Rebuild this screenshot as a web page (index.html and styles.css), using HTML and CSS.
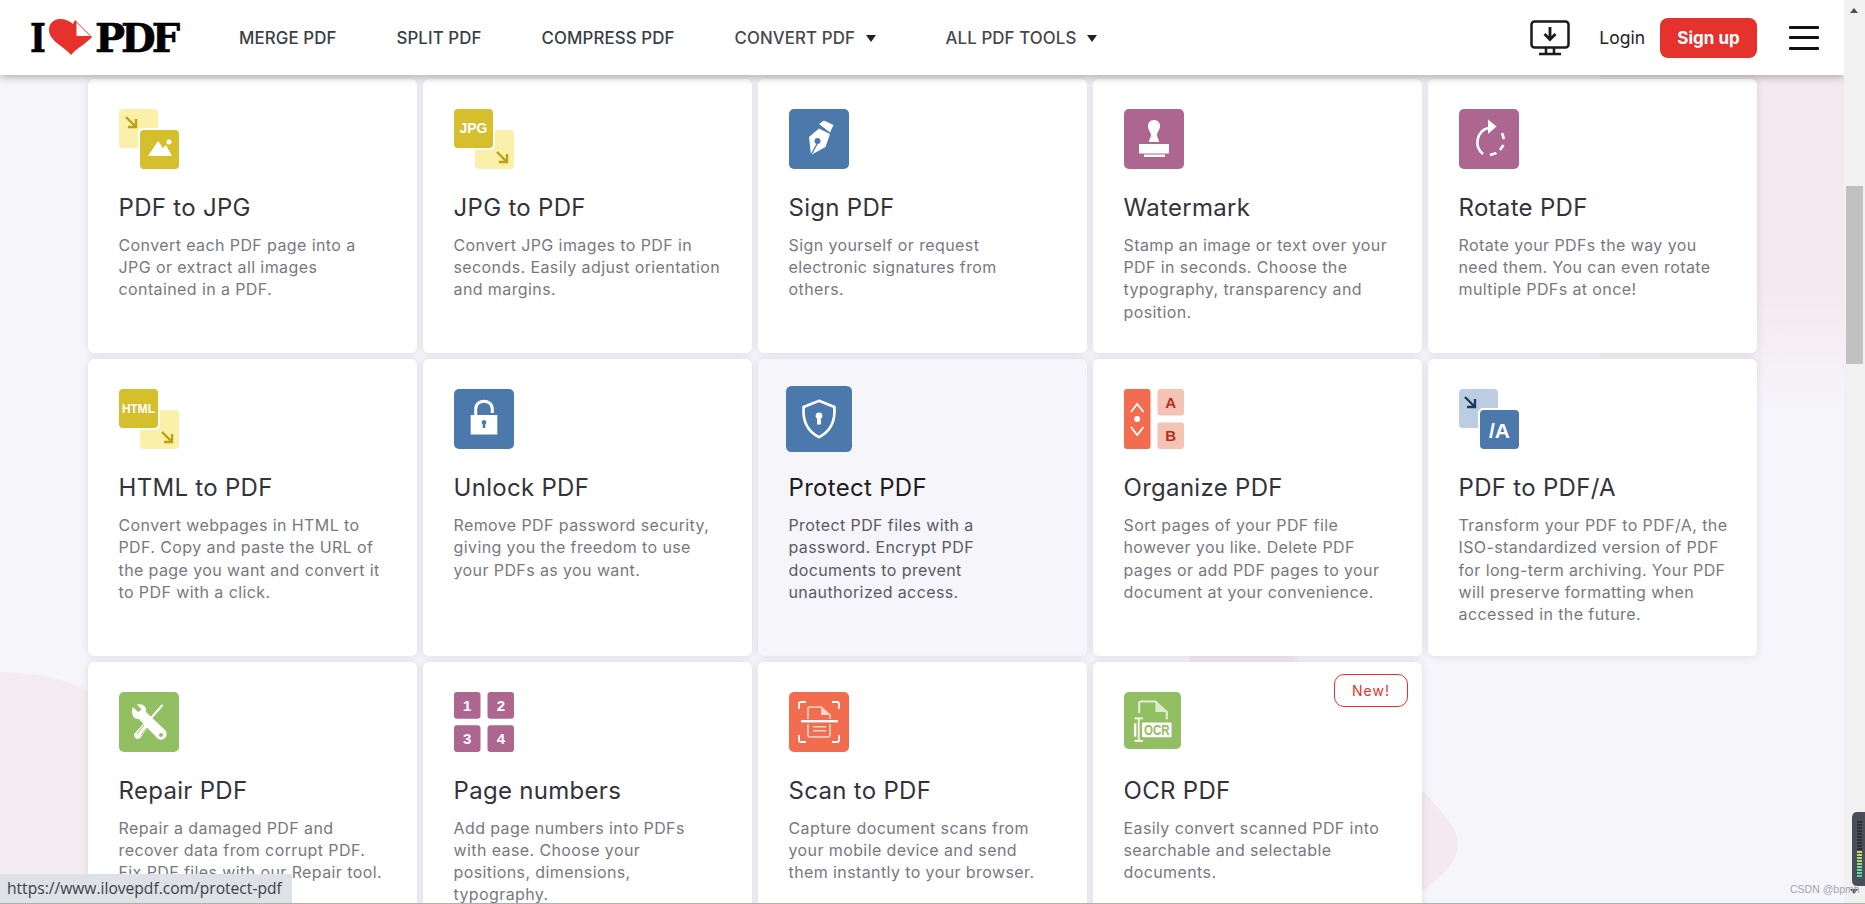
FILE: index.html
```html
<!DOCTYPE html>
<html lang="en">
<head>
  <meta charset="UTF-8">
  <title>iLovePDF</title>
  <link rel="stylesheet" href="styles.css">
</head>
<body>
  <div class="viewport">
    <svg class="blobs" width="1844" height="904" viewBox="0 0 1844 904">
      <defs>
        <linearGradient id="fade" gradientUnits="userSpaceOnUse" x1="0" y1="290" x2="0" y2="410">
          <stop offset="0" stop-color="#f5e9ef"/>
          <stop offset="1" stop-color="#f5e9ef" stop-opacity="0"/>
        </linearGradient>
      </defs>
      <path d="M0 672 C50 672 90 685 140 720 L260 904 L0 904 Z" fill="#f5ecf1"/>
      <path d="M1600 75 H1844 V410 H1600 Z" fill="url(#fade)"/>
      <path d="M1190 652 L1293 656 L1422 790 C1445 815 1458 830 1458 845 C1458 860 1440 880 1420 892 L1300 904 L1190 904 Z" fill="#f5e9ef"/>
    </svg>

    <header class="topbar">
      <a class="logo">
        <span class="logo-i">I</span>
        <svg class="logo-heart" width="44" height="37" viewBox="0 0 44 37">
          <path d="M22 36 C16 28 0 22 0 11 C0 4 5 0 11 0 C16 0 21 2 24 5 L26 1 L43 18 C38 24 28 29 22 36 Z" fill="#e5322d"/>
          <path d="M27.500 3.500 L41 17 L27.500 17 Z" fill="#fff"/>
        </svg>
        <span class="logo-pdf">PDF</span>
      </a>
      <nav class="nav">
        <a>MERGE PDF</a>
        <a>SPLIT PDF</a>
        <a>COMPRESS PDF</a>
        <a class="drop">CONVERT PDF <i class="caret"></i></a>
        <a class="drop">ALL PDF TOOLS <i class="caret"></i></a>
      </nav>
      <div class="actions">
        <svg class="desktop" width="40" height="36" viewBox="0 0 40 36" fill="none" stroke="#1a1a1a" stroke-width="2.500">
          <rect x="1.500" y="1.500" width="37" height="26" rx="3"/>
          <path d="M20 7 V19 M14.500 14 L20 19.500 L25.500 14" stroke-width="2.800"/>
          <path d="M16 28 V33 M24 28 V33 M9 34 H31"/>
        </svg>
        <a class="login">Login</a>
        <a class="signup">Sign up</a>
        <div class="burger"><span></span><span></span><span></span></div>
      </div>
    </header>

    <main class="tools">
      <div class="card">
        <svg class="icon" viewBox="0 0 60 60">
          <rect width="39" height="39" rx="4" fill="#fbf0a9"/>
          <path d="M7 8 L17 18 M17 10 V18 H9" stroke="#b9a110" stroke-width="2.400" fill="none"/>
          <rect x="19" y="19" width="42" height="42" rx="5" fill="#fff"/>
          <rect x="21" y="21" width="39" height="39" rx="4" fill="#d5bf2c"/>
          <path d="M29 47 L39 32 L44 39 L47 36 L53 47 Z" fill="#fff"/><circle cx="50" cy="33" r="2.500" fill="#fff"/>
        </svg>
        <h3>PDF to JPG</h3>
        <p>Convert each PDF page into a<br>JPG or extract all images<br>contained in a PDF.</p>
      </div>
      <div class="card">
        <svg class="icon" viewBox="0 0 60 60">
          <rect x="21" y="21" width="39" height="39" rx="4" fill="#fbf0a9"/>
          <path d="M43 43 L53 53 M53 45 V53 H45" stroke="#b9a110" stroke-width="2.400" fill="none"/>
          <rect x="-1" y="-1" width="42" height="42" rx="5" fill="#fff"/>
          <rect width="39" height="39" rx="4" fill="#d5bf2c"/>
          <text x="19.500" y="24" class="ico-txt" font-size="14">JPG</text>
        </svg>
        <h3>JPG to PDF</h3>
        <p>Convert JPG images to PDF in<br>seconds. Easily adjust orientation<br>and margins.</p>
      </div>
      <div class="card">
        <svg class="icon" viewBox="0 0 60 60">
          <rect width="60" height="60" rx="5" fill="#4b79ab"/>
          <path d="M30 15 L35 11.500 L44.500 16 L41 23.500 Z" fill="#fff"/>
          <path d="M30 19.500 L41 25 L36.500 38 L22 46 L20 28 Z" fill="#fff"/>
          <path d="M28.500 34 L22 46" stroke="#4b79ab" stroke-width="1.400"/>
          <circle cx="28.500" cy="32" r="3" fill="#4b79ab"/>
        </svg>
        <h3>Sign PDF</h3>
        <p>Sign yourself or request<br>electronic signatures from<br>others.</p>
      </div>
      <div class="card">
        <svg class="icon" viewBox="0 0 60 60">
          <rect width="60" height="60" rx="5" fill="#ad6690"/>
          <path d="M30 11 C34 11 36 14 36 17 C36 21 33 23 33 26 C33 29 35 30 35 33 H25 C25 30 27 29 27 26 C27 23 24 21 24 17 C24 14 26 11 30 11 Z" fill="#fff"/>
          <rect x="15" y="35" width="30" height="9.500" fill="#fff"/><rect x="20" y="45.500" width="21" height="2.500" fill="#fff"/>
        </svg>
        <h3>Watermark</h3>
        <p>Stamp an image or text over your<br>PDF in seconds. Choose the<br>typography, transparency and<br>position.</p>
      </div>
      <div class="card">
        <svg class="icon" viewBox="0 0 60 60">
          <rect width="60" height="60" rx="5" fill="#ad6690"/>
          <path d="M29 19 A15 15 0 0 0 24 45" stroke="#fff" stroke-width="2.600" fill="none"/>
          <path d="M29 10.500 L37.500 17.500 L29 25 Z" fill="#fff"/>
          <path d="M43 24 L45 30 M44.500 36 L41 41 M37.500 44 L31 46" stroke="#fff" stroke-width="2.600" fill="none"/>
        </svg>
        <h3>Rotate PDF</h3>
        <p>Rotate your PDFs the way you<br>need them. You can even rotate<br>multiple PDFs at once!</p>
      </div>

      <div class="card">
        <svg class="icon" viewBox="0 0 60 60">
          <rect x="21" y="21" width="39" height="39" rx="4" fill="#fbf0a9"/>
          <path d="M43 43 L53 53 M53 45 V53 H45" stroke="#b9a110" stroke-width="2.400" fill="none"/>
          <rect x="-1" y="-1" width="42" height="42" rx="5" fill="#fff"/>
          <rect width="39" height="39" rx="4" fill="#d5bf2c"/>
          <text x="19.500" y="24" class="ico-txt" font-size="13" textLength="33" lengthAdjust="spacingAndGlyphs">HTML</text>
        </svg>
        <h3>HTML to PDF</h3>
        <p>Convert webpages in HTML to<br>PDF. Copy and paste the URL of<br>the page you want and convert it<br>to PDF with a click.</p>
      </div>
      <div class="card">
        <svg class="icon" viewBox="0 0 60 60">
          <rect width="60" height="60" rx="5" fill="#4b79ab"/>
          <path d="M21.700 26 V20 C21.700 9.500 38.300 9.500 38.300 20 V24" stroke="#fff" stroke-width="3" fill="none"/>
          <rect x="16.700" y="26" width="26.600" height="19.500" fill="#fff"/>
          <path d="M30 31 A2.500 2.500 0 0 1 31.300 35.500 V39 H28.700 V35.500 A2.500 2.500 0 0 1 30 31 Z" fill="#4b79ab"/>
        </svg>
        <h3>Unlock PDF</h3>
        <p>Remove PDF password security,<br>giving you the freedom to use<br>your PDFs as you want.</p>
      </div>
      <div class="card hovered">
        <svg class="icon" viewBox="0 0 60 60">
          <rect width="60" height="60" rx="5" fill="#4b79ab"/>
          <path d="M30 13.500 L44 19 C45 32 41 41 30 46.500 C19 41 15 32 16 19 Z" stroke="#fff" stroke-width="2.400" fill="none"/>
          <path d="M30 24 A3 3 0 0 1 31.800 29.500 V35 H28.200 V29.500 A3 3 0 0 1 30 24 Z" fill="#fff"/>
        </svg>
        <h3>Protect PDF</h3>
        <p>Protect PDF files with a<br>password. Encrypt PDF<br>documents to prevent<br>unauthorized access.</p>
      </div>
      <div class="card">
        <svg class="icon" viewBox="0 0 60 60">
          <rect width="26.500" height="60" rx="3" fill="#f26c4f"/>
          <rect x="33.500" width="26.500" height="26.500" rx="3" fill="#f5c3b3"/>
          <rect x="33.500" y="33.500" width="26.500" height="26.500" rx="3" fill="#f5c3b3"/>
          <path d="M7 23 L13.200 15 L19.500 23 M7 38 L13.200 46 L19.500 38" stroke="#fff" stroke-width="1.800" fill="none"/>
          <circle cx="13.200" cy="30" r="3" fill="#fff"/>
          <text x="46.700" y="19" class="ico-txt ico-red" font-size="15">A</text>
          <text x="46.700" y="52" class="ico-txt ico-red" font-size="15">B</text>
        </svg>
        <h3>Organize PDF</h3>
        <p>Sort pages of your PDF file<br>however you like. Delete PDF<br>pages or add PDF pages to your<br>document at your convenience.</p>
      </div>
      <div class="card">
        <svg class="icon" viewBox="0 0 60 60">
          <rect width="39" height="39" rx="4" fill="#bdcde1"/>
          <path d="M6 8 L16 18 M16 10 V18 H8" stroke="#1f3a5c" stroke-width="2.400" fill="none"/>
          <rect x="19" y="19" width="42" height="42" rx="5" fill="#fff"/>
          <rect x="21" y="21" width="39" height="39" rx="4" fill="#4b79ab"/>
          <text x="40.500" y="48.500" class="ico-txt" font-size="21">/A</text>
        </svg>
        <h3>PDF to PDF/A</h3>
        <p>Transform your PDF to PDF/A, the<br>ISO-standardized version of PDF<br>for long-term archiving. Your PDF<br>will preserve formatting when<br>accessed in the future.</p>
      </div>

      <div class="card">
        <svg class="icon" viewBox="0 0 60 60">
          <rect width="60" height="60" rx="5" fill="#92bf61"/>
          <path d="M14 15 L19 20 L22.500 17.500 L18 12.500 C24 11 28 15 27 20 L46 38 A5.500 5.500 0 1 1 38 46 L20 27 C15 28 11 22 14 15 Z" fill="#fff"/>
          <circle cx="42" cy="43" r="2" fill="#92bf61"/>
          <path d="M43.500 13 L32 26" stroke="#fff" stroke-width="2"/>
          <path d="M29 26.500 L33 30.500 L21 46 C18 49 13 44 16 41 Z" fill="#fff"/>
          <path d="M25 33 L18 42 M28 36 L22 43" stroke="#92bf61" stroke-width="1"/>
        </svg>
        <h3>Repair PDF</h3>
        <p>Repair a damaged PDF and<br>recover data from corrupt PDF.<br>Fix PDF files with our Repair tool.</p>
      </div>
      <div class="card">
        <svg class="icon" viewBox="0 0 60 60">
          <rect width="26.500" height="26.700" rx="3" fill="#ad6690"/>
          <rect x="33.500" width="26.500" height="26.700" rx="3" fill="#ad6690"/>
          <rect y="33.300" width="26.500" height="26.700" rx="3" fill="#ad6690"/>
          <rect x="33.500" y="33.300" width="26.500" height="26.700" rx="3" fill="#ad6690"/>
          <text x="13.200" y="18.700" class="ico-txt" font-size="15">1</text>
          <text x="46.800" y="18.700" class="ico-txt" font-size="15">2</text>
          <text x="13.200" y="52" class="ico-txt" font-size="15">3</text>
          <text x="46.800" y="52" class="ico-txt" font-size="15">4</text>
        </svg>
        <h3>Page numbers</h3>
        <p>Add page numbers into PDFs<br>with ease. Choose your<br>positions, dimensions,<br>typography.</p>
      </div>
      <div class="card">
        <svg class="icon" viewBox="0 0 60 60">
          <rect width="60" height="60" rx="5" fill="#f26c4f"/>
          <path d="M10 17 V12 Q10 10 12 10 H17 M43 10 H48 Q50 10 50 12 V17 M10 43 V48 Q10 50 12 50 H17 M43 50 H48 Q50 50 50 48 V43" stroke="#fff" stroke-width="1.800" fill="none"/>
          <path d="M19 27 V17 Q19 15 21 15 H32 L41 23 V27 M19 32 V43 Q19 45 21 45 H39 Q41 45 41 43 V32" stroke="#fbd8cd" stroke-width="1.600" fill="none"/>
          <path d="M32 15 V23 H41 Z" fill="#fbd8cd"/>
          <rect x="12" y="28" width="37" height="2.400" fill="#fff"/>
          <path d="M24 34.700 H37 M24 38.700 H37" stroke="#fbd8cd" stroke-width="1.500"/>
        </svg>
        <h3>Scan to PDF</h3>
        <p>Capture document scans from<br>your mobile device and send<br>them instantly to your browser.</p>
      </div>
      <div class="card">
        <span class="badge">New!</span>
        <svg class="icon icon-ocr" viewBox="0 0 60 60">
          <rect width="60" height="60" rx="5" fill="#92bf61"/>
          <path d="M16 22 V12 Q16 10 18 10 H33 L45 21 V29" stroke="#e4f0d6" stroke-width="2.200" fill="none"/>
          <path d="M33 10 V21 H45 Z" fill="#dcebc8"/>
          <path d="M11 27.700 H20 M15.500 27.700 V51.500 M11 51.500 H20" stroke="#fff" stroke-width="1.800"/>
          <rect x="10.500" y="33" width="2.500" height="14" fill="#fff"/>
          <rect x="19" y="32" width="31" height="15.500" rx="1" fill="#fff"/>
          <text x="34.500" y="45" class="ico-txt ico-green" font-size="15" textLength="27" lengthAdjust="spacingAndGlyphs">OCR</text>
        </svg>
        <h3>OCR PDF</h3>
        <p>Easily convert scanned PDF into<br>searchable and selectable<br>documents.</p>
      </div>
    </main>

    <div class="status">https://www.ilovepdf.com/protect-pdf</div>
  </div>

  <div class="scrollbar">
    <i class="arrow-up"></i>
    <div class="thumb"></div>
    <i class="arrow-down"></i>
  </div>

  <div class="mark">CSDN @bpmh</div>
  <div class="meter"><div class="meter-bars"></div></div>
  <div class="edge"></div>
</body>
</html>
```

FILE: styles.css
```css
* {
  box-sizing: border-box;
}

html, body {
  height: 904px;
  margin: 0;
  overflow: hidden;
}

body {
  position: relative;
  display: flex;
  background-color: #f5f5fa;
  font-family: 'Inter', 'Roboto', sans-serif;
  color: #383e45;
}

.viewport {
  position: relative;
  flex: 1;
  height: 904px;
  overflow: hidden;
}

.blobs {
  position: absolute;
  left: 0;
  top: 0;
}

/* top bar */
.topbar {
  position: relative;
  z-index: 2;
  display: flex;
  align-items: center;
  height: 75px;
  padding-left: 30px;
  background: #fff;
  box-shadow: 0 2px 8px rgba(0, 0, 0, 0.3);
}

.logo {
  display: flex;
  align-items: center;
  width: 209px;
  color: #000;
  font-family: 'DejaVu Serif', serif;
  font-weight: bold;
  font-size: 40px;
  -webkit-text-stroke: 0.6px #000;
}

.logo-i {
  width: 19px;
  transform: scaleX(0.85);
  transform-origin: left;
}

.logo-pdf {
  margin-left: 2px;
  letter-spacing: -4px;
}

.nav {
  display: flex;
  align-items: center;
  gap: 60px;
  font-size: 16.85px;
  font-weight: 500;
  letter-spacing: 0.1px;
}

.nav .drop {
  color: #47474f;
  margin-right: 10px;
}

.caret {
  display: inline-block;
  width: 0;
  height: 0;
  margin-left: 6px;
  border: 5.5px solid transparent;
  border-top: 7px solid #222;
  border-bottom: 0;
  vertical-align: 2px;
}

.actions {
  display: flex;
  align-items: center;
  margin-left: auto;
}

.login {
  margin-left: 29px;
  font-size: 17.5px;
  color: #222;
}

.signup {
  display: flex;
  align-items: center;
  justify-content: center;
  width: 97px;
  height: 40px;
  margin-left: 15px;
  background: #e5322d;
  border-radius: 8px;
  color: #fff;
  font-size: 17px;
  font-weight: 700;
}

.burger {
  display: flex;
  flex-direction: column;
  gap: 7.5px;
  width: 30px;
  margin: 0 25px 0 32px;
}

.burger span {
  height: 3px;
  background: #111;
  border-radius: 1px;
}

/* tool cards */
.tools {
  position: relative;
  display: grid;
  grid-template-columns: repeat(5, 329px);
  gap: 6px;
  padding: 4px 0 0 88px;
}

.card {
  position: relative;
  padding: 30px 30px 30.4px 30.5px;
  background: #fff;
  border-radius: 6px;
  box-shadow: 0 0 8px rgba(60, 50, 90, 0.12);
}

.card.hovered {
  background: #f5f5fa;
}

.icon {
  display: block;
  width: 60px;
  height: 60px;
  margin-bottom: 24px;
  overflow: visible;
}

.icon-ocr {
  width: 57px;
  height: 57px;
  margin-bottom: 27px;
}

.hovered .icon {
  transform: scale(1.1);
}

.card h3 {
  margin: 0 0 11px;
  font-size: 24px;
  line-height: 30px;
  font-weight: 400;
  letter-spacing: 0.3px;
  color: #33333b;
}

.hovered h3 {
  color: #1c1c22;
}

.card p {
  margin: 0;
  font-size: 16px;
  line-height: 22.2px;
  letter-spacing: 0.4px;
  color: #78787f;
  white-space: nowrap;
}

.hovered p {
  color: #5a5a62;
}

.ico-txt {
  font-family: 'Liberation Sans', sans-serif;
  font-weight: bold;
  fill: #fff;
  text-anchor: middle;
}

.ico-red {
  fill: #b52d1e;
}

.ico-green {
  fill: #92bf61;
}

.badge {
  position: absolute;
  top: 12px;
  right: 14px;
  width: 74px;
  height: 33px;
  border: 1px solid #e5322d;
  border-radius: 10px;
  color: #e5322d;
  font-size: 14px;
  line-height: 31px;
  letter-spacing: 1px;
  text-align: center;
}

/* browser overlays */
.status {
  position: absolute;
  left: 0;
  bottom: 1px;
  z-index: 3;
  width: 292px;
  height: 29px;
  padding-left: 7px;
  background: #dee1e6;
  color: #3c4043;
  font-family: 'Open Sans', sans-serif;
  font-size: 15.6px;
  line-height: 29px;
  white-space: nowrap;
}

.mark {
  position: absolute;
  left: 1790px;
  top: 883px;
  z-index: 3;
  color: #a5a5a8;
  font-family: 'Liberation Sans', sans-serif;
  font-size: 10.5px;
  white-space: nowrap;
}

.meter {
  position: absolute;
  left: 1852px;
  top: 812px;
  z-index: 3;
  width: 13px;
  height: 74px;
  background: #4a4e59;
  border-radius: 5px 0 0 5px;
}

.meter-bars {
  position: relative;
  width: 5px;
  height: 56px;
  margin: 9px 0 0 5px;
  background: linear-gradient(#2e3038 0 53%, #d3d64f 53%, #8fdc7a 76%, #3fd6b5 100%);
}

.meter-bars::after {
  content: "";
  position: absolute;
  inset: 0;
  background: repeating-linear-gradient(transparent 0 2px, #4a4e59 2px 3px);
}

.edge {
  position: absolute;
  left: 0;
  right: 0;
  bottom: 0;
  z-index: 4;
  height: 1px;
  background: #aab5a8;
}

.scrollbar {
  position: relative;
  flex: 0 0 21px;
  height: 904px;
  background: #f1f1f1;
}

.thumb {
  position: absolute;
  top: 186px;
  left: 2px;
  width: 17px;
  height: 178px;
  background: #c1c1c1;
}

.arrow-up, .arrow-down {
  position: absolute;
  left: 6px;
  width: 0;
  height: 0;
  border: 4.5px solid transparent;
}

.arrow-up {
  top: 8px;
  border-top: 0;
  border-bottom: 5px solid #505050;
}

.arrow-down {
  top: 889px;
  border-bottom: 0;
  border-top: 5px solid #505050;
}
```
